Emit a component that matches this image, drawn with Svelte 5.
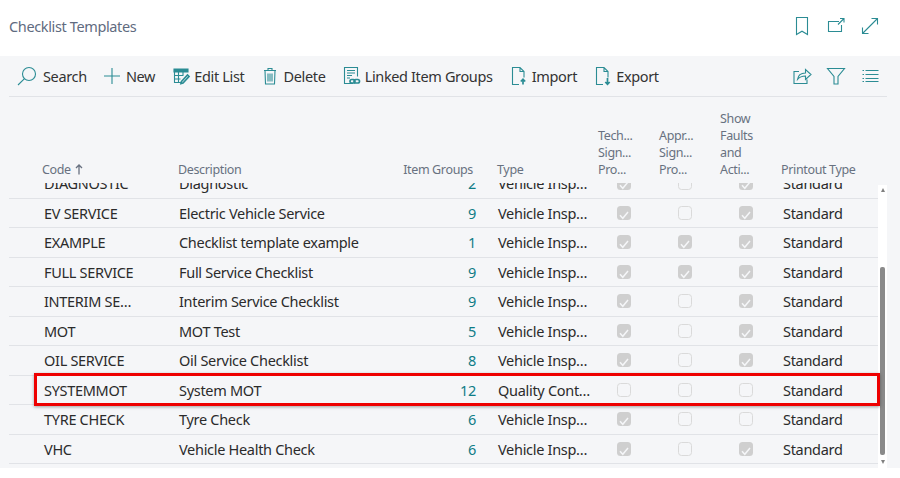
<script>
  const rows = [
    { code: 'DIAGNOSTIC', desc: 'Diagnostic', groups: 2, type: 'Vehicle Inspection', checks: [1, 0, 1] },
    { code: 'EV SERVICE', desc: 'Electric Vehicle Service', groups: 9, type: 'Vehicle Inspection', checks: [1, 0, 1] },
    { code: 'EXAMPLE', desc: 'Checklist template example', groups: 1, type: 'Vehicle Inspection', checks: [1, 1, 1] },
    { code: 'FULL SERVICE', desc: 'Full Service Checklist', groups: 9, type: 'Vehicle Inspection', checks: [1, 1, 1] },
    { code: 'INTERIM SERVICE', desc: 'Interim Service Checklist', groups: 9, type: 'Vehicle Inspection', checks: [1, 0, 1] },
    { code: 'MOT', desc: 'MOT Test', groups: 5, type: 'Vehicle Inspection', checks: [1, 0, 1] },
    { code: 'OIL SERVICE', desc: 'Oil Service Checklist', groups: 8, type: 'Vehicle Inspection', checks: [1, 0, 1] },
    { code: 'SYSTEMMOT', desc: 'System MOT', groups: 12, type: 'Quality Control', checks: [0, 0, 0] },
    { code: 'TYRE CHECK', desc: 'Tyre Check', groups: 6, type: 'Vehicle Inspection', checks: [1, 0, 0] },
    { code: 'VHC', desc: 'Vehicle Health Check', groups: 6, type: 'Vehicle Inspection', checks: [1, 0, 1] }
  ];
</script>

<div class="page">
  <header class="title-bar">
    <h1>Checklist Templates</h1>
    <div class="title-icons">
      <svg width="20" height="20" viewBox="0 0 20 20"><path d="M4.500 1.500h11v17L10 15.200 4.500 18.500z" /></svg>
      <svg width="20" height="20" viewBox="0 0 20 20"><path d="M13 5.500H2.500v10h13V9M12 8.500l6-6M14 2.500h4v4" /></svg>
      <svg width="20" height="20" viewBox="0 0 20 20"><path d="M2.500 17.500l15-15M11.500 2.500h6v6M2.500 11.500v6h6" /></svg>
    </div>
  </header>

  <div class="sheet">
    <nav class="toolbar">
      <div class="action">
        <svg width="20" height="20" viewBox="0 0 20 20"><circle cx="10" cy="8" r="6.500" /><path d="M5.500 12.700L-1 19" /></svg>
        Search
      </div>
      <div class="action">
        <svg width="20" height="20" viewBox="0 0 20 20"><path d="M10 2v16M2 10h16" /></svg>
        New
      </div>
      <div class="action">
        <svg width="20" height="20" viewBox="0 0 20 20">
          <path class="solid" d="M4 3h14v3H4z" />
          <path d="M4.500 3.500v13h7M4.500 9.500h9M4.500 13h6M8.500 6v10.500M13 6v3" />
          <path class="thick" d="M11.500 15.500l6-6.500 1.500 1.500-6 6.500-2 .5z" />
        </svg>
        Edit List
      </div>
      <div class="action">
        <svg width="20" height="20" viewBox="0 0 20 20"><path d="M4 4.500h12M8 4.500v-2h4v2M5 4.500l.5 13.500h9l.5-13.500M8 7.500v8M10 7.500v8M12 7.500v8" /></svg>
        Delete
      </div>
      <div class="action">
        <svg width="20" height="20" viewBox="0 0 20 20">
          <path d="M12 17.500H3.500V1.500h13v9M6 4.500h8M6 7h8M6 9.500h5M6 12h3" />
          <rect class="thick" x="9" y="13.500" width="5" height="3.500" rx="1.700" />
          <rect class="thick" x="13" y="13.500" width="5.500" height="3.500" rx="1.700" />
        </svg>
        Linked Item Groups
      </div>
      <div class="action">
        <svg width="20" height="20" viewBox="0 0 20 20"><path d="M11 18.500H4.500V1.500h7.500l4 4v6M12 1.500v4h4" /><path class="thick" d="M15 18.500v-5M12.800 15.500l2.200-2.300 2.200 2.300" /></svg>
        Import
      </div>
      <div class="action">
        <svg width="20" height="20" viewBox="0 0 20 20"><path d="M11 18.500H4.500V1.500h7.500l4 4v6M12 1.500v4h4" /><path class="thick" d="M15.500 12v6M13.300 16l2.200 2.300 2.200-2.300" /></svg>
        Export
      </div>
      <div class="toolbar-right">
        <svg width="20" height="20" viewBox="0 0 20 20"><path d="M7 5.500H2v12h13v-4M5.500 13.500c.5-4 3.500-6.500 8-6.500V3.500l5.500 5-5.500 5V10c-3.500 0-6 1-8 3.500z" /></svg>
        <svg width="20" height="20" viewBox="0 0 20 20"><path d="M1.500 2.500h17l-6.500 8v7.500h-4v-7.500z" /></svg>
        <svg width="20" height="20" viewBox="0 0 20 20"><path d="M5.500 4.500h13M5.500 8.500h13M5.500 12.500h13M5.500 15.500h13M2.500 4.500h1.500M2.500 8.500h1.500M2.500 12.500h1.500M2.500 15.500h1.500" /></svg>
      </div>
    </nav>

    <div class="grid head">
      <div class="h-code">Code<svg class="sort" width="8" height="11" viewBox="0 0 8 11"><path d="M4 10.500V1M1 4l3-3 3 3" /></svg></div>
      <div class="h-desc">Description</div>
      <div class="h-groups">Item Groups</div>
      <div class="h-type">Type</div>
      <div class="h-check">Tech...<br />Sign...<br />Pro...</div>
      <div class="h-check">Appr...<br />Sign...<br />Pro...</div>
      <div class="h-check">Show<br />Faults<br />and<br />Acti...</div>
      <div class="h-print">Printout Type</div>
    </div>

    <div class="list">
      <div class="rows">
        {#each rows as row}
          <div class="grid row">
            <div class="code">{row.code}</div>
            <div class="desc">{row.desc}</div>
            <div class="groups">{row.groups}</div>
            <div class="type">{row.type}</div>
            {#each row.checks as on}
              <div class="check-cell">
                <span class="check" class:on>
                  {#if on}
                    <svg width="14" height="14" viewBox="0 0 14 14"><path d="M3 7.300l2.800 3L11 4" /></svg>
                  {/if}
                </span>
              </div>
            {/each}
            <div class="print">Standard</div>
          </div>
        {/each}
      </div>
      <div class="scrollbar">
        <span class="tri up"></span>
        <span class="thumb"></span>
        <span class="tri down"></span>
      </div>
      <div class="highlight"></div>
    </div>
  </div>
</div>

<style>
  :global(body) {
    margin: 0;
    background: #fff;
  }

  .page {
    width: 900px;
    height: 478px;
    overflow: hidden;
    font-family: "Noto Sans", "Open Sans", sans-serif;
    color: #2b2b2b;
  }

  .title-bar {
    height: 56px;
    display: flex;
    justify-content: space-between;
    align-items: flex-start;
    box-sizing: border-box;
    padding: 16px 20px 0 9px;
  }

  h1 {
    margin: 0;
    font-size: 14.500px;
    line-height: 21px;
    font-weight: 400;
    letter-spacing: -0.37px;
    color: #5f6b80;
  }

  .title-icons {
    display: flex;
    gap: 14px;
  }

  svg {
    flex: none;
    overflow: visible;
  }

  svg path, svg circle, svg rect {
    fill: none;
    stroke: #2b8c94;
    stroke-width: 1.100;
  }

  svg .thick {
    stroke-width: 1.700;
  }

  svg .solid {
    fill: #2b8c94;
  }

  .sheet {
    height: 412px;
    background: #f5f6f8;
    box-sizing: border-box;
    padding-left: 9px;
  }

  .toolbar {
    height: 41px;
    box-sizing: border-box;
    width: 878px;
    display: flex;
    align-items: center;
    gap: 15.200px;
    padding: 0 0 0 10px;
    border-bottom: 1.500px solid #e1e3e7;
    font-size: 14.500px;
    letter-spacing: -0.36px;
    color: #333;
  }

  .action {
    display: flex;
    align-items: center;
    gap: 4px;
    white-space: nowrap;
  }

  .toolbar-right {
    margin-left: auto;
    display: flex;
    gap: 14px;
    padding-right: 7px;
  }

  .grid {
    display: grid;
    grid-template-columns: 170px 205px 92px 117px 61px 61px 61px 102px;
    width: 869px;
  }

  .head {
    height: 86px;
    box-sizing: border-box;
    align-items: end;
    padding-bottom: 5px;
    font-size: 12.500px;
    line-height: 17px;
    letter-spacing: -0.35px;
    color: #687180;
  }

  .h-code {
    padding-left: 33px;
  }

  .sort {
    margin-left: 4px;
    vertical-align: -1px;
  }

  .sort path {
    stroke: #687180;
    stroke-width: 1.300;
  }

  .h-desc {
    margin-left: -1px;
  }

  .h-groups {
    text-align: right;
    padding-right: 3px;
  }

  .h-type {
    padding-left: 21px;
  }

  .h-check {
    padding-left: 5px;
  }

  .h-print {
    padding-left: 5px;
  }

  .list {
    position: relative;
    display: flex;
    height: 285px;
    align-items: flex-start;
  }

  .rows {
    width: 869px;
    height: 281px;
    overflow: hidden;
    display: flex;
    flex-direction: column;
    justify-content: flex-end;
  }

  .row {
    flex: none;
    height: 29.500px;
    box-sizing: border-box;
    align-items: center;
    border-bottom: 1px solid #e1e3e7;
    font-size: 14.500px;
    letter-spacing: -0.3px;
  }

  .code {
    padding-left: 35px;
    white-space: nowrap;
    overflow: hidden;
    text-overflow: ellipsis;
    padding-right: 41px;
  }

  .groups {
    text-align: right;
    color: #0e7c86;
  }

  .type {
    padding-left: 22px;
    white-space: nowrap;
    overflow: hidden;
    text-overflow: ellipsis;
  }

  .check-cell {
    display: flex;
    justify-content: center;
  }

  .check {
    width: 14px;
    height: 14px;
    box-sizing: border-box;
    border: 1.500px solid #dadada;
    border-radius: 3.500px;
    display: block;
  }

  .check.on {
    border: none;
    background: #cfcfcf;
  }

  .check svg path {
    stroke: #f5f6f8;
    stroke-width: 1.500;
  }

  .print {
    padding-left: 7px;
  }

  .scrollbar {
    width: 9px;
    height: 283px;
    margin-top: 2px;
    background: #fff;
    display: flex;
    flex-direction: column;
    align-items: center;
  }

  .tri {
    width: 0;
    height: 0;
    border-left: 2.500px solid transparent;
    border-right: 2.500px solid transparent;
  }

  .tri.up {
    margin-top: 3px;
    border-bottom: 4px solid #808080;
  }

  .tri.down {
    margin-top: 5px;
    border-top: 4px solid #808080;
  }

  .thumb {
    width: 5px;
    height: 188px;
    margin-top: 75px;
    background: #8a8a8a;
    border-radius: 2px;
  }

  .highlight {
    position: absolute;
    left: 25px;
    top: 190px;
    width: 846px;
    height: 33px;
    box-sizing: border-box;
    border: 3px solid #ee0000;
    box-shadow: 0 1px 3px rgba(0, 0, 0, 0.35);
  }
</style>
